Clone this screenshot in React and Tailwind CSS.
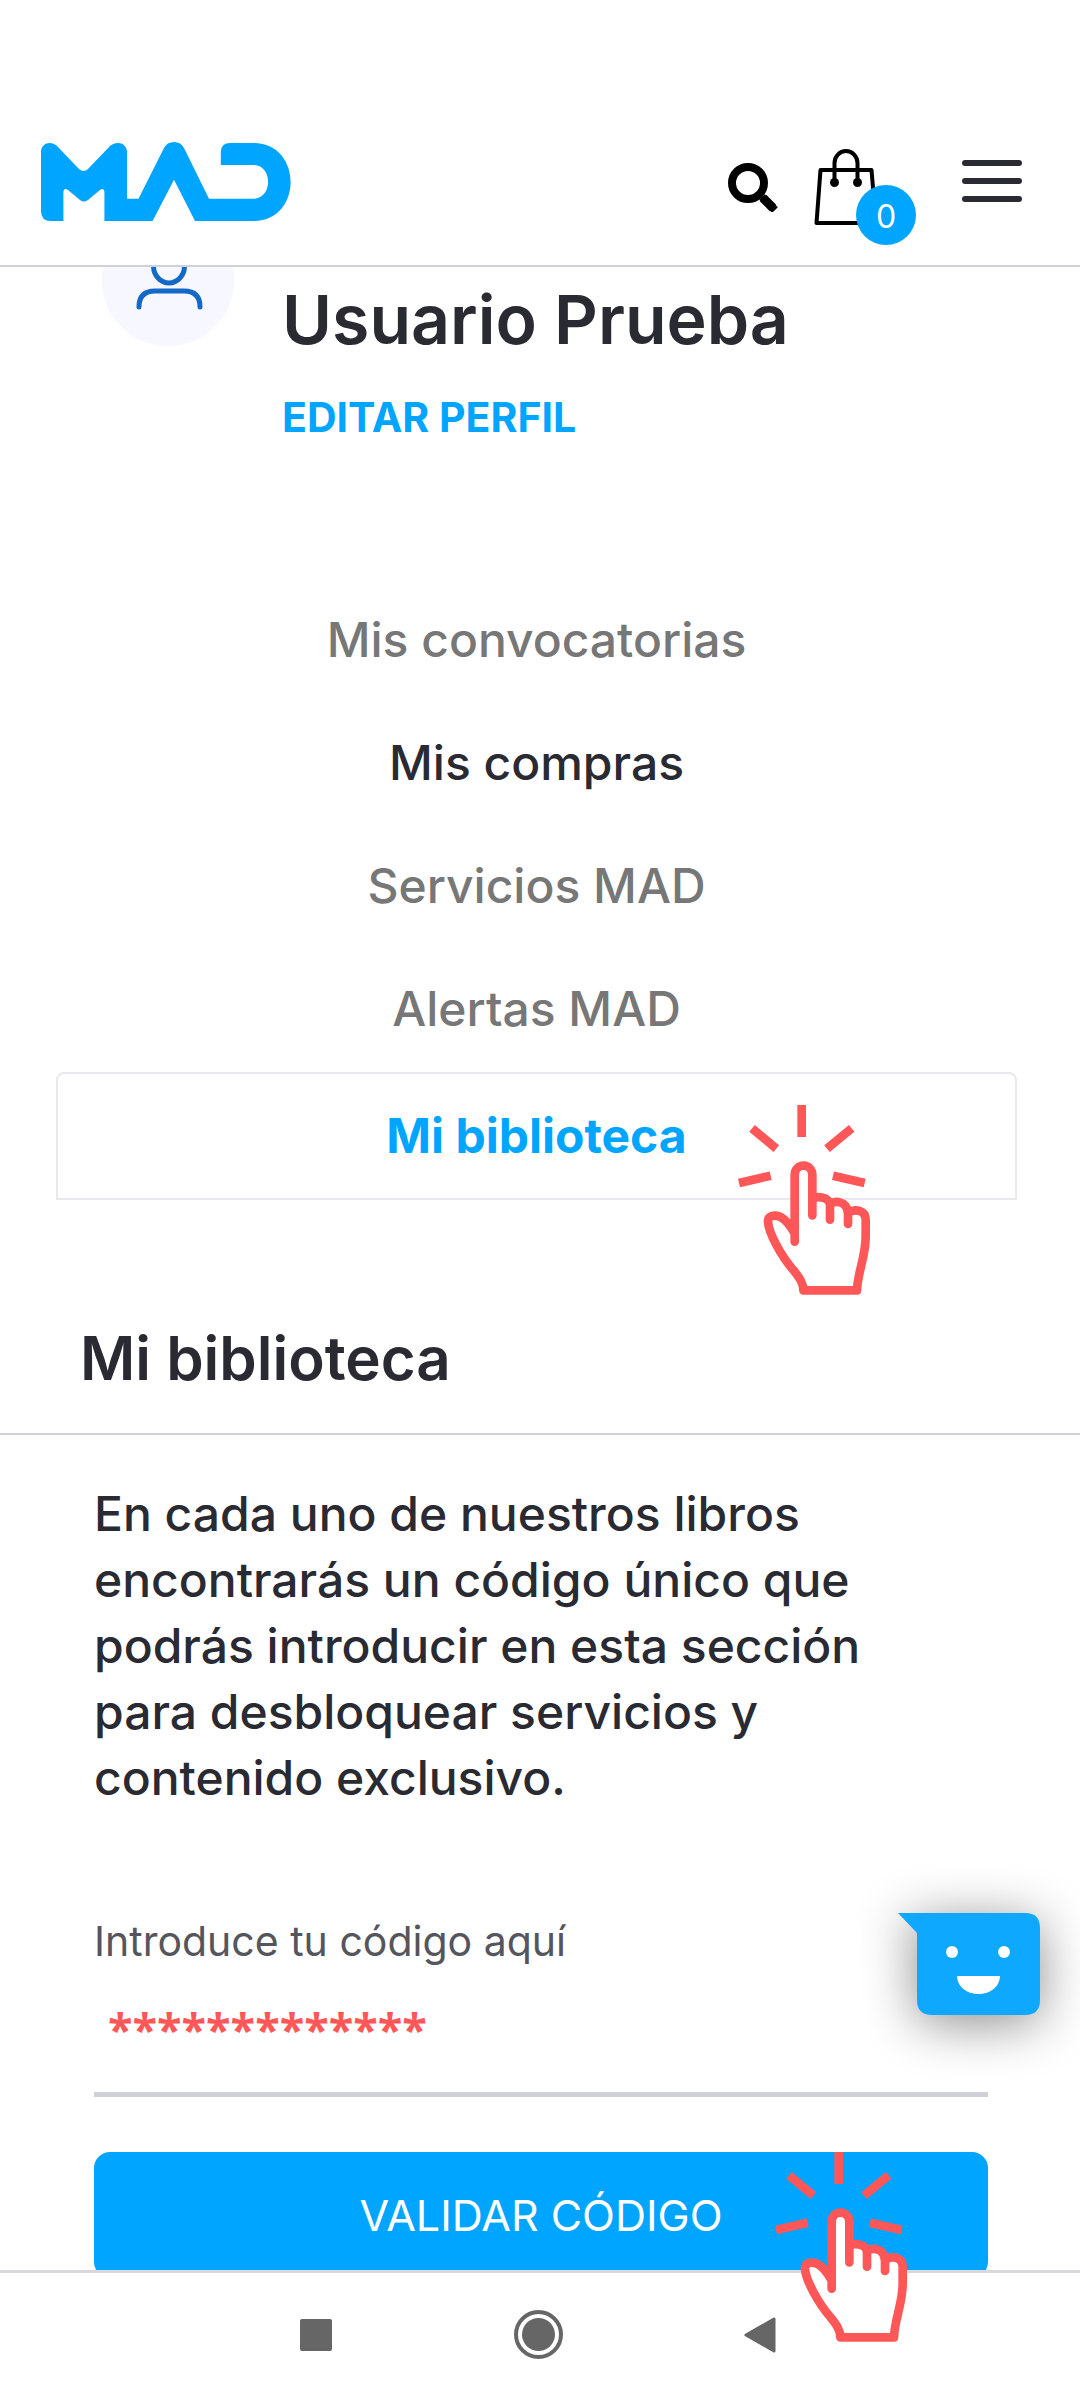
import React, { useState } from 'react';

const menuItems = [
    { key: 'convocatorias', label: 'Mis convocatorias', tone: 'text-[#777777]' },
    { key: 'compras', label: 'Mis compras', tone: 'text-[#2a2a33]' },
    { key: 'servicios', label: 'Servicios MAD', tone: 'text-[#777777]' },
    { key: 'alertas', label: 'Alertas MAD', tone: 'text-[#777777]' }
];

const Logo = () => (
    <svg viewBox="0 0 250 79" className="h-[79px] w-[250px]" fill="#00a5ff" aria-hidden="true">
        <path d="M0 10C0 1 10-2 16 4L38 27Q42.700 31 47 27L69 4C76-2 86 1 86 10V56.700H97.500L123 6Q126 0 133 0T143 6L168 56.700H212.500C232 56.700 232 23 212.500 23H179.800V10Q180 1 189 1H212.500C262 1 262 79 212.500 79H154L133 37.700L111.600 79H63.400V50Q63 45 59 48L47 58Q42.700 61 39 58L27 48Q23 45 22.400 50V79H10Q0 79 0 69Z" />
    </svg>
);

const SearchIcon = () => (
    <svg viewBox="0 0 50 62" className="h-[62px] w-[50px]" fill="none" stroke="#000" aria-hidden="true">
        <circle cx="20" cy="33" r="16" strokeWidth="8" />
        <path d="M34 47L47 60" strokeWidth="8" />
        <path d="M35 48L45 58" strokeWidth="9" strokeLinejoin="round" />
    </svg>
);

const BagIcon = () => (
    <svg viewBox="0 0 64 88" className="h-[88px] w-16" fill="none" stroke="#000" strokeWidth="4" aria-hidden="true">
        <path d="M6.500 33H57.500L62 86H2.500Z" strokeLinejoin="round" />
        <path d="M20.500 45V26a11.500 12 0 0 1 23 0v19" />
        <circle cx="20.500" cy="45.500" r="4.500" fill="#000" stroke="none" />
        <circle cx="43.500" cy="45.500" r="4.500" fill="#000" stroke="none" />
    </svg>
);

const MenuIcon = () => (
    <svg viewBox="0 0 60 42" className="h-[42px] w-[60px]" stroke="#2a2a33" strokeWidth="6" strokeLinecap="round" aria-hidden="true">
        <path d="M3 3H57M3 21H57M3 39H57" />
    </svg>
);

const UserIcon = () => (
    <svg viewBox="0 0 132 132" className="h-[132px] w-[132px] shrink-0" fill="none" stroke="#1469c7" strokeWidth="5" strokeLinecap="round" aria-hidden="true">
        <circle cx="66" cy="66" r="66" fill="#f6f7ff" stroke="none" />
        <ellipse cx="67" cy="52" rx="15.500" ry="17" />
        <path d="M37 93Q37 77 53 77H82Q98 77 98 93" />
    </svg>
);

const TapHand = ({ className }) => (
    <svg viewBox="114 165 396 570" className={`pointer-events-none absolute h-[190px] w-[132px] ${className}`} fill="none" stroke="#ff5757" strokeWidth="26" aria-hidden="true">
        <path d="M305 165V261M156 235L229 296M455 235L381 296M117 399L212 377M399 377L494 399" />
        <path
            d="M284 575V376C284 337 337 337 337 376V445C348 440 384 438 390 462C400 452 440 450 444 488C465 475 497 480 497 510V560C497 620 472 670 471 721H310C310 700 300 685 280 660C245 620 206 550 204 515C203 500 220 492 240 500C255 508 270 525 284 550"
            fill="#fff"
            strokeLinejoin="round"
            strokeLinecap="round"
        />
        <path d="M337 440V496M390 460V509M444 480V522" strokeLinecap="round" />
    </svg>
);

const ChatBubble = () => (
    <svg viewBox="0 0 142 102" className="h-[102px] w-[142px] overflow-visible" aria-hidden="true">
        <path d="M0 0H127Q142 0 142 15V87Q142 102 127 102H34Q19 102 19 87V20Z" fill="#0fa8ff" />
        <circle cx="54" cy="39" r="6" fill="#fff" />
        <circle cx="106" cy="39" r="6" fill="#fff" />
        <path d="M59 63H102C101 87 60 87 59 63Z" fill="#fff" />
    </svg>
);

const Header = () => (
    <header className="flex shrink-0 items-center justify-between border-b-2 border-[#d0d0d8] pt-[137px] pr-[58px] pb-10 pl-[41px]">
        <a href="#inicio" aria-label="MAD">
            <Logo />
        </a>
        <div className="flex items-center">
            <button type="button" aria-label="Buscar" className="mr-9">
                <SearchIcon />
            </button>
            <button type="button" aria-label="Carrito" className="relative mr-[84px]">
                <BagIcon />
                <span className="absolute top-12 left-[42px] flex h-[60px] w-[60px] items-center justify-center rounded-full bg-[#00a5ff] pt-1 text-[32px] text-white">0</span>
            </button>
            <button type="button" aria-label="Menú">
                <MenuIcon />
            </button>
        </div>
    </header>
);

const AndroidNav = () => (
    <nav className="flex h-[130px] shrink-0 items-center justify-between border-t-3 border-[#d8d8dc] bg-white pr-[304px] pb-1 pl-[300px]">
        <button type="button" aria-label="Recientes" className="h-8 w-8 rounded-[2px] bg-[#666666]" />
        <button type="button" aria-label="Inicio" className="flex h-[49px] w-[49px] items-center justify-center rounded-full border-4 border-[#666666]">
            <span className="h-[33px] w-[33px] rounded-full bg-[#666666]" />
        </button>
        <button type="button" aria-label="Atrás">
            <svg viewBox="0 0 32 36" className="h-9 w-8" fill="#666666" stroke="#666666" strokeWidth="3" strokeLinejoin="round">
                <path d="M2 18L30 2V34Z" />
            </svg>
        </button>
    </nav>
);

const App = () => {
    const [code, setCode] = useState('*************');

    return (
        <div className="relative flex h-screen flex-col bg-white font-['Inter',sans-serif] text-[#2a2a33]">
            <Header />

            <main className="flex-1 overflow-x-hidden overflow-y-auto [scrollbar-width:none]">
                <section className="flex items-start gap-12 px-[102px]">
                    <div className="-mt-[53px]">
                        <UserIcon />
                    </div>
                    <div className="pt-3">
                        <h1 className="text-[68px] leading-[80px] font-semibold">Usuario Prueba</h1>
                        <a href="#perfil" className="mt-8 block text-[41px] leading-[52px] font-bold text-[#00a5ff]">EDITAR PERFIL</a>
                    </div>
                </section>

                <ul className="mt-[137px] pr-[63px] pl-14 text-center text-[48px] font-medium">
                    {menuItems.map((item) => (
                        <li key={item.key} className="h-[123px]">
                            <a href={`#${item.key}`} className={`block leading-[120px] ${item.tone}`}>{item.label}</a>
                        </li>
                    ))}
                    <li className="relative rounded-t-lg border-2 border-[#e8e8ee]">
                        <a href="#biblioteca" className="block leading-[124px] font-bold text-[#00a5ff]">Mi biblioteca</a>
                        <TapHand className="top-[31px] right-[145px]" />
                    </li>
                </ul>

                <h2 className="mt-[122px] border-b-2 border-[#d0d0d8] px-20 pb-[39px] text-[60px] leading-[72px] font-semibold">Mi biblioteca</h2>

                <section className="pt-[46px] pr-[92px] pb-10 pl-[94px]">
                    <p className="max-w-[840px] text-[48px] leading-[66px] font-medium">
                        En cada uno de nuestros libros encontrarás un código único que podrás introducir en esta sección para desbloquear servicios y contenido exclusivo.
                    </p>
                    <form onSubmit={(e) => e.preventDefault()}>
                        <label htmlFor="codigo" className="mt-[106px] block text-[41px] leading-[48px] text-[#55555d]">Introduce tu código aquí</label>
                        <input
                            id="codigo"
                            value={code}
                            onChange={(e) => setCode(e.target.value)}
                            className="block h-[132px] w-full border-b-5 border-[#d0d0d8] px-[14px] font-['Open_Sans',sans-serif] text-[45px] font-bold text-[#ff5757] outline-none"
                        />
                        <button type="submit" className="mt-[55px] h-[126px] w-full rounded-2xl bg-[#00a5ff] text-[43px] text-white">VALIDAR CÓDIGO</button>
                    </form>
                </section>
            </main>

            <AndroidNav />

            <button type="button" aria-label="Chat" className="absolute right-10 bottom-[385px] drop-shadow-[0_8px_26px_rgba(0,0,0,0.45)]">
                <ChatBubble />
            </button>
            <TapHand className="right-[173px] bottom-[58px]" />
        </div>
    );
};

export default App;
